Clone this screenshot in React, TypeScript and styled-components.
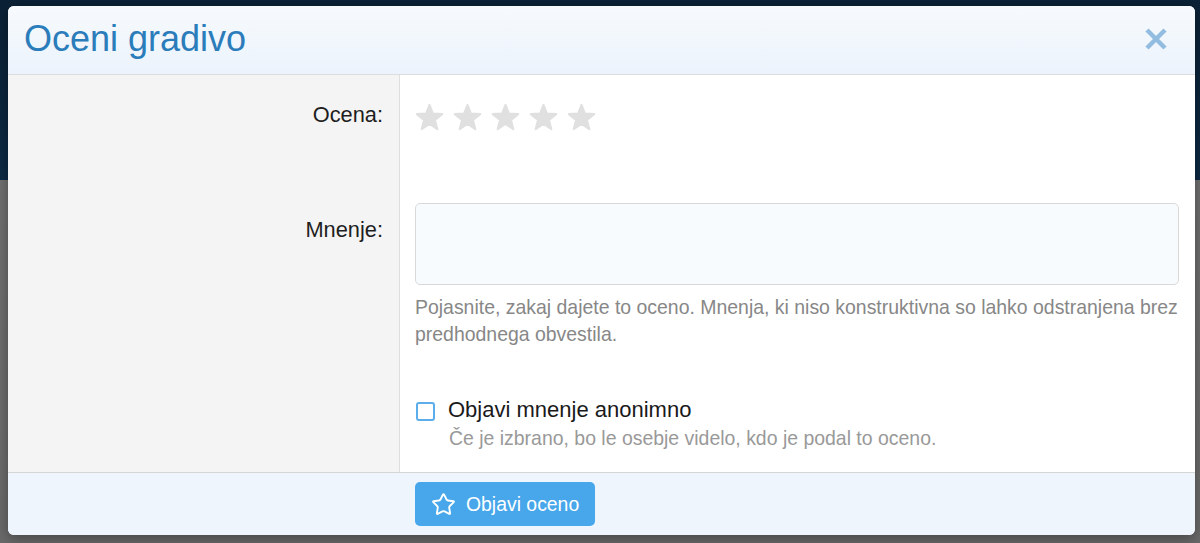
import styled, { createGlobalStyle } from "styled-components";
import { Star } from "lucide-react";

const GlobalStyle = createGlobalStyle`
  html, body {
    margin: 0;
    padding: 0;
  }
  body {
    font-family: "Liberation Sans", Arial, sans-serif;
  }
  * {
    box-sizing: border-box;
  }
`;

const Backdrop = styled.div`
  min-height: 100vh;
  padding: 6px 5px 8px 8px;
  background: linear-gradient(
    to bottom,
    #0b2135 0,
    #0d2a44 180px,
    #707070 180px,
    #6a6a6a 100%
  );
`;

const Modal = styled.div`
  display: flex;
  flex-direction: column;
  background: #fff;
  border-radius: 6px;
  overflow: hidden;
  box-shadow: 0 4px 14px rgba(0, 0, 0, 0.35);
`;

const Header = styled.div`
  display: flex;
  align-items: center;
  justify-content: space-between;
  height: 69px;
  padding: 0 28px 2px 16px;
  background: linear-gradient(to bottom, #f7fafd, #ebf3fc);
  border-bottom: 1px solid #dcdcdc;
`;

const Title = styled.h1`
  margin: 0;
  font-size: 36px;
  font-weight: normal;
  color: #2b7cba;
`;

const CloseButton = styled.button`
  display: flex;
  padding: 0;
  border: none;
  background: none;
  cursor: pointer;
`;

const Form = styled.div`
  display: grid;
  grid-template-columns: 392px 1fr;
`;

const LabelCell = styled.div<{ $top: number }>`
  background: #f4f4f4;
  border-right: 1px solid #dedede;
  padding: ${(p) => p.$top}px 16px 0 0;
  text-align: right;
  font-size: 21.8px;
  line-height: 30px;
  color: #1e1e1e;
`;

const FieldCell = styled.div<{ $top: number; $bottom: number }>`
  padding: ${(p) => p.$top}px 16px ${(p) => p.$bottom}px 15px;
`;

const Stars = styled.div`
  display: flex;
  gap: 9px;
  height: 28px;
`;

const TextArea = styled.textarea`
  display: block;
  width: 100%;
  height: 82px;
  resize: none;
  background: #f8fbfe;
  border: 1px solid #d9d9d9;
  border-radius: 5px;
  font: inherit;
`;

const Help = styled.p`
  margin: 9px 0 0;
  font-size: 19.45px;
  line-height: 27px;
  color: #878787;
`;

const CheckRow = styled.label`
  display: flex;
  align-items: center;
  gap: 13px;
  font-size: 22px;
  line-height: 30px;
  color: #1a1a1a;
`;

const Box = styled.span`
  width: 19px;
  height: 19px;
  margin: 2px 0 0 1px;
  border: 2px solid #5baeea;
  border-radius: 3px;
  background: #fff;
`;

const SubText = styled.div`
  padding-left: 34px;
  font-size: 19.45px;
  line-height: 27px;
  color: #999;
`;

const Footer = styled.div`
  height: 63px;
  padding: 9px 0 0 407px;
  background: #eef5fd;
  border-top: 1px solid #d6d6d6;
`;

const SubmitButton = styled.button`
  display: flex;
  align-items: center;
  gap: 10px;
  height: 44px;
  padding: 0 16px 0 16px;
  border: none;
  border-radius: 5px;
  background: #47a7ea;
  color: #fff;
  font-family: inherit;
  font-size: 19.4px;
  cursor: pointer;
`;

function RatingStar() {
  return (
    <svg width="29" height="28" viewBox="0 0 100 96">
      <polygon
        points="50,6 62,36 94,38 69,58 77,90 50,72 23,90 31,58 6,38 38,36"
        fill="#e0e0e0"
        stroke="#e0e0e0"
        strokeWidth="7"
        strokeLinejoin="round"
      />
    </svg>
  );
}

export default function App() {
  return (
    <Backdrop>
      <GlobalStyle />
      <Modal>
        <Header>
          <Title>Oceni gradivo</Title>
          <CloseButton aria-label="Zapri">
            <svg width="22" height="22" viewBox="0 0 22 22">
              <path
                d="M2 2 L20 20 M20 2 L2 20"
                stroke="#92bde0"
                strokeWidth="4.5"
              />
            </svg>
          </CloseButton>
        </Header>

        <Form>
          {/* ocena */}
          <LabelCell $top={25}>Ocena:</LabelCell>
          <FieldCell $top={28} $bottom={72}>
            <Stars>
              {[1, 2, 3, 4, 5].map((n) => (
                <RatingStar key={n} />
              ))}
            </Stars>
          </FieldCell>

          {/* mnenje */}
          <LabelCell $top={12}>Mnenje:</LabelCell>
          <FieldCell $top={0} $bottom={47}>
            <TextArea />
            <Help>
              Pojasnite, zakaj dajete to oceno. Mnenja, ki niso konstruktivna
              so lahko odstranjena brez predhodnega obvestila.
            </Help>
          </FieldCell>

          {/* anonimno */}
          <LabelCell $top={0} />
          <FieldCell $top={0} $bottom={20}>
            <CheckRow>
              <Box />
              Objavi mnenje anonimno
            </CheckRow>
            <SubText>
              Če je izbrano, bo le osebje videlo, kdo je podal to oceno.
            </SubText>
          </FieldCell>
        </Form>

        <Footer>
          <SubmitButton>
            <Star size={25} strokeWidth={1.8} />
            Objavi oceno
          </SubmitButton>
        </Footer>
      </Modal>
    </Backdrop>
  );
}
